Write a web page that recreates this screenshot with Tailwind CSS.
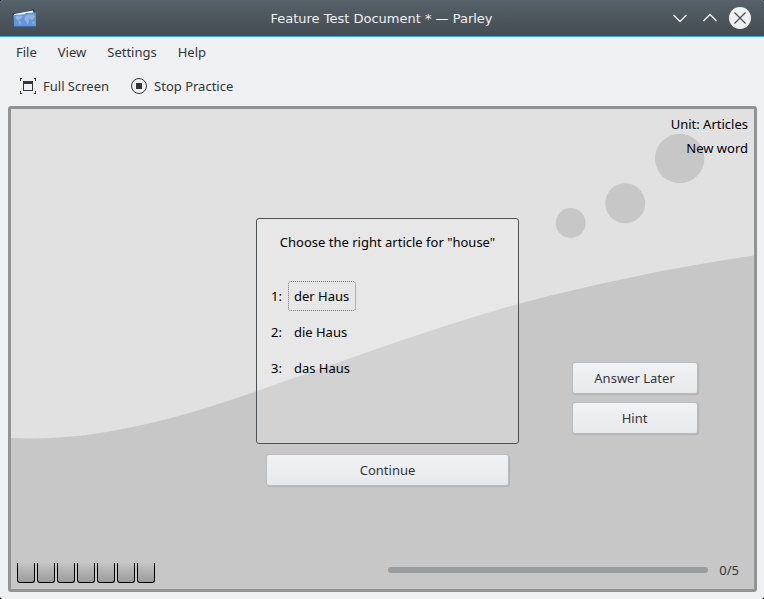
<!DOCTYPE html>
<html lang="en">
<head>
<meta charset="utf-8">
<meta name="viewport" content="width=device-width, initial-scale=1">
<title>Feature Test Document * — Parley</title>
<script src="https://cdn.jsdelivr.net/npm/@tailwindcss/browser@4"></script>
</head>
<body class="bg-black font-['Noto_Sans',sans-serif] text-[13px] leading-5 text-[#31363b]">
<div class="flex min-h-screen flex-col overflow-hidden rounded-[3px] bg-[#eff0f1]">
  <header class="grid h-[37px] grid-cols-[1fr_auto_1fr] items-center border-b border-[#3daee9] bg-linear-to-b from-[#566169] to-[#444c52] pr-[13px] pl-3">
    <svg class="h-6 w-6" viewBox="0 0 24 24" aria-hidden="true">
      <g transform="translate(0 3)">
        <path d="M0 4.500 L10 3 L13 3 L22 0 L23 4 L3 8 Z" fill="#1d3c63"/>
        <path d="M2 5 L21 1.500 L22 7 L3 9 Z" fill="#f5f7f9"/>
        <path d="M0 5 L2 18 L2 8 Z" fill="#234a7c"/>
        <path d="M1.500 6 L12 5.200 L14 4 L24 3.500 V18 H2 Z" fill="#6597d6"/>
        <path d="M3.500 7l5-.8 2 1.500-1.500 2-2 .8.5 1.800 1.500 1.200-1 2.500-1.200-2-.5-2.500L4 9.500zM13 7.500l3-2 6 .3 1 2.200-2 1.500-1 2-1.500-1.500-2-.5.5 3-1.500 3-1.500-3-1.500-2zM20 13l2-.5.5 2-2 .5z" fill="#8fb4e3"/>
        <path d="M2 17.500H24" stroke="#3e6aa5"/>
      </g>
    </svg>
    <h1 class="pt-[2px] font-['DejaVu_Sans',sans-serif] text-[13px] text-[#eff0f1]">Feature Test Document * — Parley</h1>
    <div class="flex items-center justify-end gap-2">
      <button class="flex h-[22px] w-[22px] items-center justify-center" aria-label="Minimize">
        <svg class="h-[22px] w-[22px]" viewBox="0 0 22 22" fill="none" stroke="#eff0f1" stroke-width="1.3"><path d="M4.500 8 L11 14.500 L17.500 8"/></svg>
      </button>
      <button class="flex h-[22px] w-[22px] items-center justify-center" aria-label="Maximize">
        <svg class="h-[22px] w-[22px]" viewBox="0 0 22 22" fill="none" stroke="#eff0f1" stroke-width="1.3"><path d="M4.500 14 L11 7.500 L17.500 14"/></svg>
      </button>
      <button class="flex h-[22px] w-[22px] items-center justify-center" aria-label="Close">
        <svg class="h-[22px] w-[22px]" viewBox="0 0 22 22" fill="none"><circle cx="11" cy="11" r="11" fill="#eff0f1"/><path d="M5.500 5.500 L16.500 16.500 M16.500 5.500 L5.500 16.500" stroke="#4a535a" stroke-width="1.3"/></svg>
      </button>
    </div>
  </header>

  <nav class="flex h-[30px] items-center gap-[21px] px-4" aria-label="Menu bar">
    <button>File</button>
    <button>View</button>
    <button>Settings</button>
    <button>Help</button>
  </nav>

  <div class="flex h-[39px] items-center gap-[22px] px-5 pb-px" role="toolbar">
    <button class="flex items-center gap-[7px]">
      <svg class="h-4 w-4" viewBox="0 0 16 16" aria-hidden="true">
        <path d="M0 0h2.500L0 2.500z M16 0v2.500L13.500 0z M16 16h-2.500L16 13.500z M0 16v-2.500L2.500 16z" fill="#31363b"/>
        <path d="M.5 3V2 M15.500 3V2 M.5 13v1 M15.500 13v1" stroke="#31363b"/>
        <path d="M3 3h10v10H3z M4 6v6h8V6z" fill="#31363b" fill-rule="evenodd"/>
      </svg>
      Full Screen
    </button>
    <button class="flex items-center gap-[7px]">
      <svg class="h-4 w-4" viewBox="0 0 16 16" aria-hidden="true">
        <circle cx="8" cy="8" r="7.500" fill="none" stroke="#31363b"/>
        <path d="M5 5h6v6H5z" fill="#31363b"/>
      </svg>
      Stop Practice
    </button>
  </div>

  <main class="relative isolate mx-2 mr-[7px] mb-[7px] flex flex-1 flex-col rounded-[3px] border-3 border-[#929493] bg-[#e1e1e1]">
    <svg class="absolute inset-0 -z-10 h-full w-full" viewBox="0 0 743 480" preserveAspectRatio="none" aria-hidden="true">
      <g fill="#c7c7c7">
        <path d="M0 329 C83 333 166 310 249 281 C335 251 421 219 507 195 C586 174 665 158 743 146.500 V480 H0 Z"/>
        <circle cx="559.700" cy="114" r="15"/>
        <circle cx="614.200" cy="94.300" r="20"/>
        <circle cx="668.700" cy="49.500" r="24.700"/>
      </g>
    </svg>

    <div class="px-[6px] pt-[3px] text-right leading-6 text-black">
      <p>Unit: Articles</p>
      <p>New word</p>
    </div>

    <div class="mt-[58px] grid grid-cols-[minmax(0,245fr)_263px_minmax(0,235fr)]">
      <div class="col-start-2">
        <fieldset class="h-[226px] rounded-[3px] border border-[#4f5052] bg-white/20 px-[14px] pt-[13px] text-black">
          <p class="text-center">Choose the right article for "house"</p>
          <div class="mt-[29px] flex flex-col items-start gap-[6px]">
            <label class="flex items-center gap-[6px]">1:
              <input type="radio" name="article" class="peer sr-only" checked>
              <span class="rounded-[3px] border border-transparent py-1 pr-[6px] pl-[5px] peer-checked:border-dotted peer-checked:border-[#777]">der Haus</span>
            </label>
            <label class="flex items-center gap-[6px]">2:
              <input type="radio" name="article" class="peer sr-only">
              <span class="rounded-[3px] border border-transparent py-1 pr-[6px] pl-[5px] peer-checked:border-dotted peer-checked:border-[#777]">die Haus</span>
            </label>
            <label class="flex items-center gap-[6px]">3:
              <input type="radio" name="article" class="peer sr-only">
              <span class="rounded-[3px] border border-transparent py-1 pr-[6px] pl-[5px] peer-checked:border-dotted peer-checked:border-[#777]">das Haus</span>
            </label>
          </div>
        </fieldset>
        <div class="px-[10px] pt-[10px]">
          <button class="h-8 w-full rounded-[3px] border border-[#b9bbbc] bg-linear-to-b from-[#f1f2f3] to-[#e8e9ea] shadow-[1px_1px_0_#b1b3b4]">Continue</button>
        </div>
      </div>
      <div class="flex flex-col items-center gap-2 pt-36 pr-1">
        <button class="h-8 w-[126px] rounded-[3px] border border-[#b9bbbc] bg-linear-to-b from-[#f1f2f3] to-[#e8e9ea] shadow-[1px_1px_0_#b1b3b4]">Answer Later</button>
        <button class="h-8 w-[126px] rounded-[3px] border border-[#b9bbbc] bg-linear-to-b from-[#f1f2f3] to-[#e8e9ea] shadow-[1px_1px_0_#b1b3b4]">Hint</button>
      </div>
    </div>

    <footer class="mt-auto grid grid-cols-2 items-center gap-5 pr-[15px] pb-[3px] pl-[6px]">
      <div class="flex gap-[2px]" aria-hidden="true">
        <span class="h-5 w-[18px] rounded-b-[3px] border border-t-0 border-black bg-linear-to-b from-[#c4c4c4] to-[#9c9c9c]"></span>
        <span class="h-5 w-[18px] rounded-b-[3px] border border-t-0 border-black bg-linear-to-b from-[#c4c4c4] to-[#9c9c9c]"></span>
        <span class="h-5 w-[18px] rounded-b-[3px] border border-t-0 border-black bg-linear-to-b from-[#c4c4c4] to-[#9c9c9c]"></span>
        <span class="h-5 w-[18px] rounded-b-[3px] border border-t-0 border-black bg-linear-to-b from-[#c4c4c4] to-[#9c9c9c]"></span>
        <span class="h-5 w-[18px] rounded-b-[3px] border border-t-0 border-black bg-linear-to-b from-[#c4c4c4] to-[#9c9c9c]"></span>
        <span class="h-5 w-[18px] rounded-b-[3px] border border-t-0 border-black bg-linear-to-b from-[#c4c4c4] to-[#9c9c9c]"></span>
        <span class="h-5 w-[18px] rounded-b-[3px] border border-t-0 border-black bg-linear-to-b from-[#c4c4c4] to-[#9c9c9c]"></span>
      </div>
      <div class="flex items-center gap-[11px] pb-[6px]">
        <div class="h-[6px] flex-1 rounded-full bg-[#9b9c9e]" role="progressbar" aria-valuemin="0" aria-valuemax="5" aria-valuenow="0" aria-label="Progress"></div>
        <span>0/5</span>
      </div>
    </footer>
  </main>
</div>
</body>
</html>
